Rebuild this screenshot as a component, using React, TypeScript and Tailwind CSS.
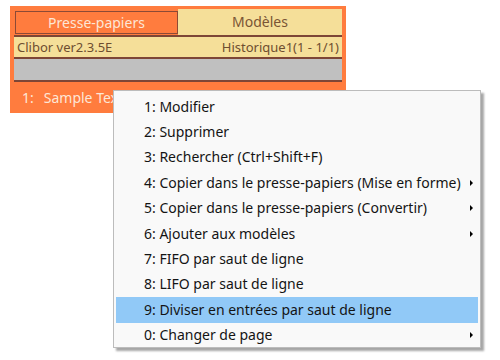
import React from "react";

const items: { label: string; sub?: boolean; active?: boolean }[] = [
  { label: "1: Modifier" },
  { label: "2: Supprimer" },
  { label: "3: Rechercher (Ctrl+Shift+F)" },
  { label: "4: Copier dans le presse-papiers (Mise en forme)", sub: true },
  { label: "5: Copier dans le presse-papiers (Convertir)", sub: true },
  { label: "6: Ajouter aux modèles", sub: true },
  { label: "7: FIFO par saut de ligne" },
  { label: "8: LIFO par saut de ligne" },
  { label: "9: Diviser en entrées par saut de ligne", active: true },
  { label: "0: Changer de page", sub: true },
];

export default function App() {
  return (
    <div
      className="relative w-[500px] h-[360px] bg-white overflow-hidden"
      style={{ fontFamily: '"Noto Sans", "Open Sans", sans-serif' }}
    >
      <div className="ml-[10px] mt-[6px] w-[336px] h-[107px] bg-[#ff7c3e] pt-[3px] px-[4px] flex flex-col">
        <div className="flex h-[26px]">
          <div className="w-[163px] ml-[1px] mt-[2px] mb-[1px] border border-[#8c4a36] bg-[#ff7c3e] flex items-center justify-center text-[14px] text-[#fde6d6] leading-none">
            Presse-papiers
          </div>
          <div className="flex-1 bg-[#f5df99] flex items-center justify-center text-[14px] text-[#7a5535] leading-none">
            Modèles
          </div>
        </div>
        <div className="h-[2px] bg-[#7d4636]" />
        <div className="h-[20px] bg-[#f5df99] flex items-center justify-between px-[3px] text-[13px] text-[#6e4e30] leading-none">
          <span>Clibor ver2.3.5E</span>
          <span>Historique1(1 - 1/1)</span>
        </div>
        <div className="h-[2px] bg-[#7d4636]" />
        <div className="h-[21px] bg-[#c0c0c0]" />
        <div className="h-[2px] bg-[#7d4636]" />
        <div className="flex-1 flex items-center pl-[8px] text-[14px] text-[#fde6d6] leading-none">
          <span>1:</span>
          <span className="ml-[10px]">Sample Text</span>
        </div>
      </div>

      <div className="absolute left-[113px] top-[90px] w-[368px] h-[258px] bg-[#f9f9f9] border border-[#bcbcbc] shadow-[3px_3px_2px_rgba(0,0,0,0.35)] pt-[3px] px-[2px]">
        {items.map((it) => (
          <div
            key={it.label}
            className={
              "relative h-[25.4px] flex items-center pl-[28px] text-[14px] text-[#141414] leading-none " +
              (it.active ? "bg-[#91c9f7]" : "")
            }
          >
            {it.label}
            {it.sub && (
              <svg
                className="absolute right-[5px] top-1/2 -translate-y-1/2"
                width="3"
                height="6"
                viewBox="0 0 3 6"
              >
                <path d="M0 0 L3 3 L0 6 Z" fill="#000" />
              </svg>
            )}
          </div>
        ))}
      </div>
    </div>
  );
}
